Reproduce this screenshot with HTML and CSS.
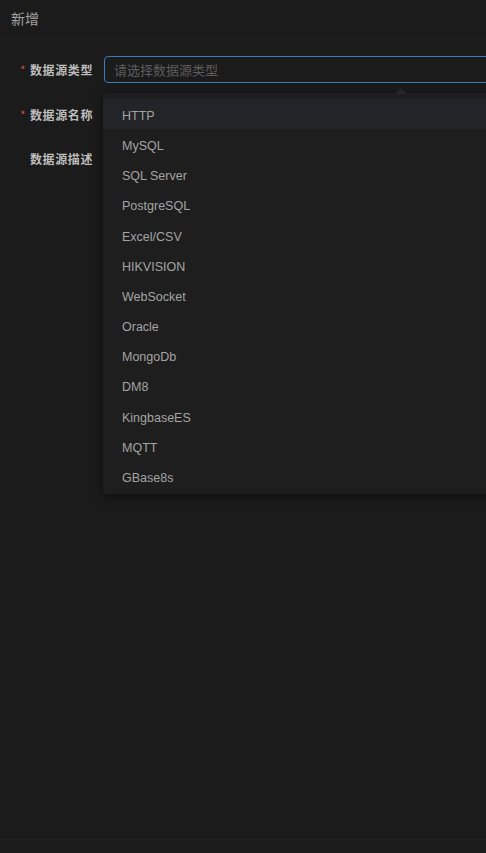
FILE: index.html
```html
<!DOCTYPE html>
<html lang="zh-CN">
<head>
<meta charset="utf-8">
<title>新增</title>
<link rel="stylesheet" href="styles.css">
</head>
<body>
<div class="panel">
  <div class="header">新增</div>
  <div class="body">
    <form class="form">
      <div class="row">
        <label class="label required">数据源类型</label>
        <div class="control">
          <div class="select focused">
            <span class="placeholder">请选择数据源类型</span>
          </div>
          <div class="dropdown">
            <span class="arrow"></span>
            <ul class="options">
              <li class="option hover">HTTP</li>
              <li class="option">MySQL</li>
              <li class="option">SQL Server</li>
              <li class="option">PostgreSQL</li>
              <li class="option">Excel/CSV</li>
              <li class="option">HIKVISION</li>
              <li class="option">WebSocket</li>
              <li class="option">Oracle</li>
              <li class="option">MongoDb</li>
              <li class="option">DM8</li>
              <li class="option">KingbaseES</li>
              <li class="option">MQTT</li>
              <li class="option">GBase8s</li>
            </ul>
          </div>
        </div>
      </div>
      <div class="row">
        <label class="label required">数据源名称</label>
        <div class="control"></div>
      </div>
      <div class="row">
        <label class="label">数据源描述</label>
        <div class="control"></div>
      </div>
    </form>
  </div>
  <div class="footer"></div>
</div>
</body>
</html>
```

FILE: styles.css
```css
html, body {
  margin: 0;
  padding: 0;
  background: #1b1b1b;
  height: 100%;
  overflow: hidden;
}
body {
  font-family: "Liberation Sans", "Noto Sans CJK SC", Arial, sans-serif;
  color: #a8a8a8;
}
.panel {
  display: flex;
  flex-direction: column;
  height: 853px;
  width: 486px;
  overflow: hidden;
}
.header {
  height: 38px;
  line-height: 37px;
  padding-left: 11px;
  font-family: "Noto Sans CJK SC", sans-serif;
  font-size: 14px;
  color: #a3a3a3;
  border-bottom: 1px solid #232323;
  flex: none;
}
.body {
  flex: 1;
  padding-top: 17px;
}
.form {
  margin: 0;
}
.row {
  display: flex;
  align-items: center;
  height: 27px;
  margin-bottom: 17.5px;
}
.label {
  flex: none;
  width: 93px;
  text-align: right;
  font-family: "Noto Sans CJK SC", sans-serif;
  font-size: 12px;
  font-weight: 700;
  color: #bdbdbd;
  letter-spacing: 0.6px;
}
.label.required::before {
  content: "*";
  color: #d0504c;
  font-weight: 400;
  margin-right: 4px;
  font-size: 11px;
  position: relative;
  top: -1px;
}
.control {
  flex: 1;
  margin-left: 11px;
  position: relative;
  height: 100%;
}
.select {
  box-sizing: border-box;
  height: 27px;
  width: 420px;
  border: 1px solid #3b7bbd;
  border-radius: 4px;
  background: #1b1b1b;
  display: flex;
  align-items: center;
  padding-left: 9px;
}
.placeholder {
  font-family: "Noto Sans CJK SC", sans-serif;
  font-size: 13px;
  color: #5d5d5d;
}
.dropdown {
  position: absolute;
  left: -1px;
  top: 37px;
  width: 420px;
  background: #1e1e1e;
  border-radius: 4px;
  box-shadow: 0 2px 10px rgba(0, 0, 0, 0.55);
  padding: 6px 0 3px;
  z-index: 5;
}
.arrow {
  position: absolute;
  top: -5px;
  left: 292px;
  width: 0;
  height: 0;
  border-left: 6px solid transparent;
  border-right: 6px solid transparent;
  border-bottom: 6px solid #262626;
}
.options {
  list-style: none;
  margin: 0;
  padding: 0;
}
.option {
  box-sizing: border-box;
  height: 30.17px;
  padding-top: 4px;
  line-height: 26px;
  padding-left: 19px;
  font-size: 12.5px;
  color: #a4a4a4;
}
.option.hover {
  background: #232427;
}
.footer {
  flex: none;
  height: 13px;
  border-top: 1px solid #222222;
}
```
